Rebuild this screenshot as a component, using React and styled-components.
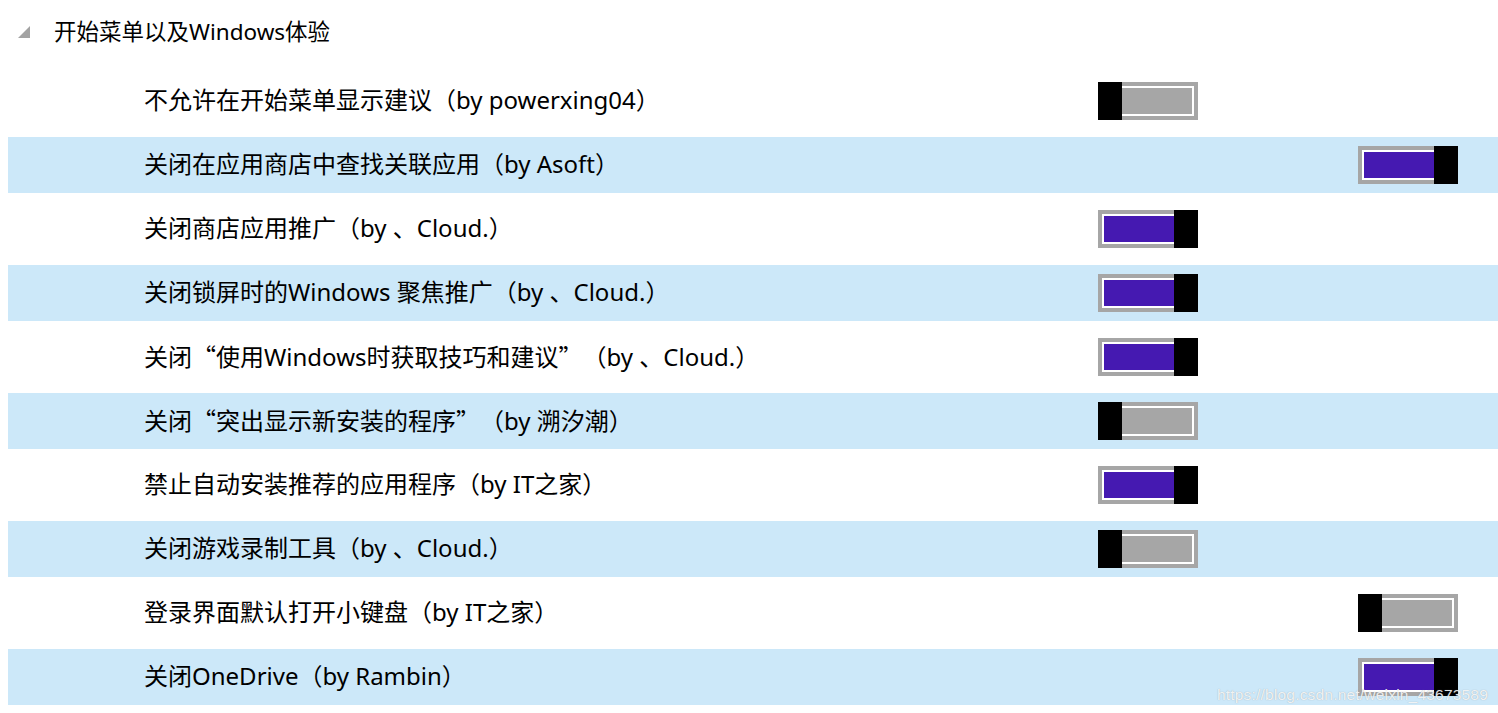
import React from "react"
import styled, { createGlobalStyle } from "styled-components"

const GlobalStyle = createGlobalStyle`
  html, body {
    margin: 0;
    padding: 0;
    background: #ffffff;
  }
  body {
    font-family: "Noto Sans", "Noto Sans CJK SC", sans-serif;
    color: #000000;
  }
`

const Page = styled.div`
  position: relative;
  width: 1498px;
  height: 713px;
  overflow: hidden;
  background: #ffffff;
`

const Header = styled.div`
  display: flex;
  align-items: center;
  height: 69px;
  padding-left: 18px;
  font-size: 22.5px;
  line-height: 1;
`

const Caret = styled.svg`
  width: 12px;
  height: 12px;
  margin-right: 24px;
  margin-bottom: 6px;
`

const HeaderText = styled.span`
  padding-bottom: 4px;
`

const List = styled.div`
  display: flex;
  flex-direction: column;
`

const Row = styled.div`
  display: grid;
  grid-template-columns: 954px auto;
  align-items: center;
  height: 56px;
  margin: 4px 0 4px 8px;
  padding-left: 136px;
  background: ${p => (p.$shaded ? "#cce8f9" : "transparent")};
`

const Label = styled.span`
  font-size: 24px;
  line-height: 1;
  white-space: nowrap;
  padding-bottom: 2px;
`

const Quote = styled.span`
  font-family: "Noto Sans CJK SC", sans-serif;
  margin-right: ${p => (p.$close ? "12px" : "0")};
`

const Track = styled.div`
  position: relative;
  box-sizing: border-box;
  width: 100px;
  height: 38px;
  margin-left: ${p => (p.$far ? "260px" : "0")};
  border: 4px solid #a6a6a6;
`

const Fill = styled.div`
  box-sizing: border-box;
  width: 100%;
  height: 100%;
  border: 2px solid #ffffff;
  background: ${p => (p.$on ? "#4519b1" : "#a6a6a6")};
`

const Thumb = styled.div`
  position: absolute;
  top: -4px;
  bottom: -4px;
  width: 24px;
  background: #000000;
  ${p => (p.$on ? "right: -4px;" : "left: -4px;")}
`

const Watermark = styled.div`
  position: absolute;
  right: 10px;
  bottom: 9px;
  font-family: "Liberation Sans", Arial, sans-serif;
  font-size: 15.5px;
  color: rgba(255, 255, 255, 0.85);
  text-shadow: 0 0 1px rgba(120, 120, 120, 0.6);
  letter-spacing: 0.2px;
`

const items = [
  { text: "不允许在开始菜单显示建议（by powerxing04）", on: false, far: false },
  { text: "关闭在应用商店中查找关联应用（by Asoft）", on: true, far: true },
  { text: "关闭商店应用推广（by 、Cloud.）", on: true, far: false },
  { text: "关闭锁屏时的Windows 聚焦推广（by 、Cloud.）", on: true, far: false },
  { text: ["关闭", "“", "使用Windows时获取技巧和建议", "”", "（by 、Cloud.）"], on: true, far: false },
  { text: ["关闭", "“", "突出显示新安装的程序", "”", "（by 溯汐潮）"], on: false, far: false },
  { text: "禁止自动安装推荐的应用程序（by IT之家）", on: true, far: false },
  { text: "关闭游戏录制工具（by 、Cloud.）", on: false, far: false },
  { text: "登录界面默认打开小键盘（by IT之家）", on: false, far: true },
  { text: "关闭OneDrive（by Rambin）", on: true, far: true },
]

const Toggle = ({ on, far }) => (
  <Track $far={far}>
    <Fill $on={on} />
    <Thumb $on={on} />
  </Track>
)

const renderText = text =>
  Array.isArray(text)
    ? text.map((part, i) =>
        i % 2 === 1 ? (
          <Quote key={i} $close={i === 3}>
            {part}
          </Quote>
        ) : (
          part
        )
      )
    : text

export default function App() {
  return (
    <Page>
      <GlobalStyle />
      <Header>
        <Caret viewBox="0 0 12 12">
          <polygon points="12,0 12,12 0,12" fill="#a3a3a3" />
        </Caret>
        <HeaderText>开始菜单以及Windows体验</HeaderText>
      </Header>
      <List>
        {items.map((it, i) => (
          <Row key={i} $shaded={i % 2 === 1}>
            <Label>{renderText(it.text)}</Label>
            <Toggle on={it.on} far={it.far} />
          </Row>
        ))}
      </List>
      <Watermark>https://blog.csdn.net/weixin_43673589</Watermark>
    </Page>
  )
}
